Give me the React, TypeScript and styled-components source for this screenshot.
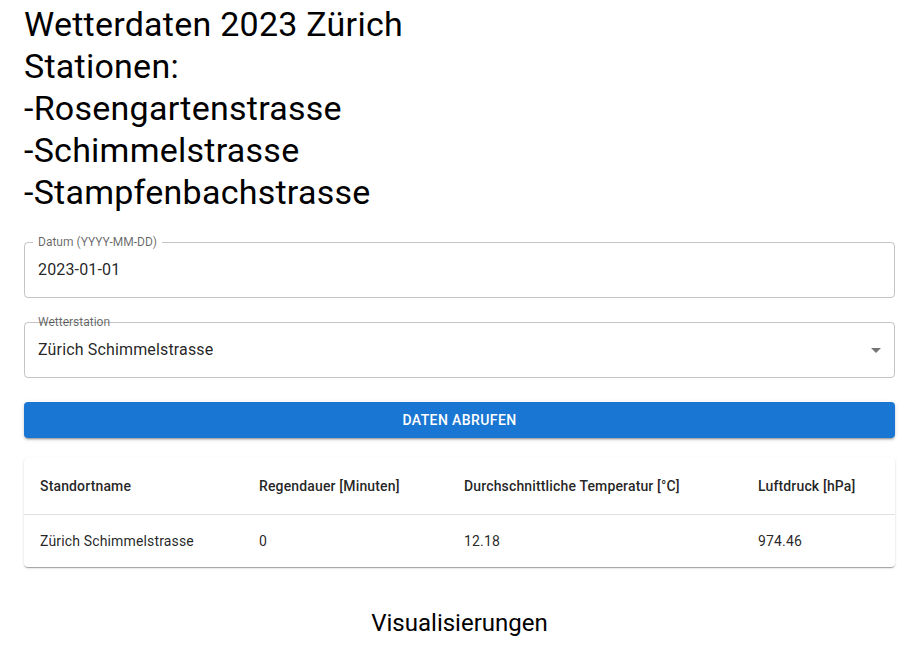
import * as React from 'react';
import styled, { createGlobalStyle } from 'styled-components';

const GlobalStyle = createGlobalStyle`
    body {
        margin: 0;
        background: #fff;
        font-family: Roboto, "Helvetica", "Arial", sans-serif;
        color: rgba(0, 0, 0, 0.87);
    }
`;

const Container = styled.div`
    padding: 3px 27px 0 24px;
`;

const Title = styled.h1`
    margin: 0;
    font-size: 34px;
    font-weight: 400;
    line-height: 42px;
    letter-spacing: 0.00735em;
    color: #000;
`;

const Field = styled.div`
    position: relative;
    margin-top: ${({ $top }: { $top: number }) => $top}px;
    height: 56px;
    box-sizing: border-box;
    border: 1px solid rgba(0, 0, 0, 0.23);
    border-radius: 4px;
    display: flex;
    align-items: center;
    padding: 0 13px 2px;
`;

const FieldLabel = styled.label<{ $notch: boolean }>`
    position: absolute;
    left: 8px;
    top: -7px;
    padding: 0 5px;
    font-size: 12px;
    line-height: 12px;
    color: rgba(0, 0, 0, 0.6);
    background: ${({ $notch }) => ($notch ? '#fff' : 'transparent')};
`;

const Value = styled.div`
    flex: 1;
    font-size: 16px;
    line-height: 23px;
    letter-spacing: 0.00938em;
    color: rgba(0, 0, 0, 0.87);
`;

const Arrow = styled.svg`
    width: 24px;
    height: 24px;
    fill: rgba(0, 0, 0, 0.54);
    margin-right: -7px;
    margin-bottom: -2px;
`;

const Button = styled.button`
    display: block;
    width: 100%;
    height: 36px;
    margin-top: 24px;
    border: none;
    border-radius: 4px;
    background: #1976d2;
    color: #fff;
    font-family: Roboto, "Helvetica", "Arial", sans-serif;
    font-size: 14px;
    font-weight: 500;
    letter-spacing: 0.02857em;
    text-transform: uppercase;
    box-shadow: 0px 3px 1px -2px rgba(0,0,0,0.2), 0px 2px 2px 0px rgba(0,0,0,0.14), 0px 1px 5px 0px rgba(0,0,0,0.12);
    cursor: pointer;
`;

const Paper = styled.div`
    margin-top: 20px;
    border-radius: 4px;
    background: #fff;
    box-shadow: 0px 2px 1px -1px rgba(0,0,0,0.2), 0px 1px 1px 0px rgba(0,0,0,0.14), 0px 1px 3px 0px rgba(0,0,0,0.12);
    overflow: hidden;
`;

const Table = styled.table`
    width: 100%;
    border-collapse: collapse;
    table-layout: fixed;
`;

const HeadCell = styled.th`
    text-align: left;
    padding: 16px;
    font-size: 14px;
    font-weight: 500;
    line-height: 24px;
    letter-spacing: 0.01071em;
    border-bottom: 1px solid rgba(224, 224, 224, 1);
`;

const Cell = styled.td`
    padding: 16px;
    font-size: 14px;
    line-height: 20px;
    letter-spacing: 0.01071em;
`;

const Subtitle = styled.h2`
    margin: 40px 0 0;
    text-align: center;
    font-size: 24px;
    font-weight: 400;
    line-height: 32px;
    color: #000;
`;

const columns = [
    { title: 'Standortname', width: 219 },
    { title: 'Regendauer [Minuten]', width: 205 },
    { title: 'Durchschnittliche Temperatur [°C]', width: 294 },
    { title: 'Luftdruck [hPa]', width: 153 },
];

const row = ['Zürich Schimmelstrasse', '0', '12.18', '974.46'];

export default function App() {
    return (
        <Container>
            <GlobalStyle />
            <Title>
                Wetterdaten 2023 Zürich<br />
                Stationen:<br />
                -Rosengartenstrasse<br />
                -Schimmelstrasse<br />
                -Stampfenbachstrasse
            </Title>
            <Field $top={29}>
                <FieldLabel $notch>Datum (YYYY-MM-DD)</FieldLabel>
                <Value>2023-01-01</Value>
            </Field>
            <Field $top={24}>
                <FieldLabel $notch={false}>Wetterstation</FieldLabel>
                <Value>Zürich Schimmelstrasse</Value>
                <Arrow viewBox="0 0 24 24">
                    <path d="M7 10l5 5 5-5z" />
                </Arrow>
            </Field>
            <Button>Daten abrufen</Button>
            <Paper>
                <Table>
                    <colgroup>
                        {columns.map(c => <col key={c.title} style={{ width: c.width }} />)}
                    </colgroup>
                    <thead>
                        <tr>
                            {columns.map(c => <HeadCell key={c.title}>{c.title}</HeadCell>)}
                        </tr>
                    </thead>
                    <tbody>
                        <tr>
                            {row.map((v, i) => <Cell key={i}>{v}</Cell>)}
                        </tr>
                    </tbody>
                </Table>
            </Paper>
            <Subtitle>Visualisierungen</Subtitle>
        </Container>
    );
}
